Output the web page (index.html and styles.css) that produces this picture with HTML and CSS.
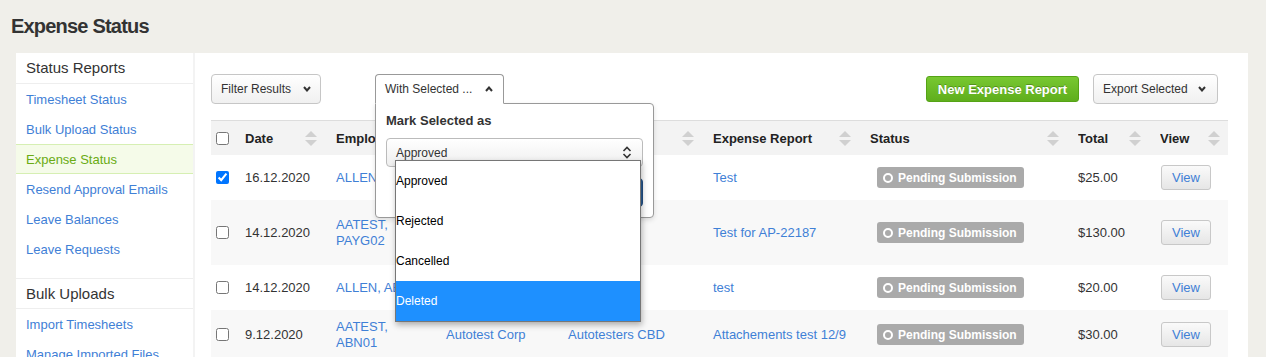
FILE: index.html
```html
<!DOCTYPE html>
<html lang="en">
<head>
  <meta charset="UTF-8">
  <meta name="viewport" content="width=device-width, initial-scale=1.0">
  <title>Expense Status</title>
  <link rel="stylesheet" href="styles.css">
</head>
<body>

  <h1 class="page-title">Expense Status</h1>

  <div class="layout">
    <aside class="sidebar">
      <div class="side-heading">Status Reports</div>
      <ul class="side-links">
        <li><a href="#">Timesheet Status</a></li>
        <li><a href="#">Bulk Upload Status</a></li>
        <li class="active"><a href="#">Expense Status</a></li>
        <li><a href="#">Resend Approval Emails</a></li>
        <li><a href="#">Leave Balances</a></li>
        <li><a href="#">Leave Requests</a></li>
      </ul>
      <div class="side-heading side-heading-next">Bulk Uploads</div>
      <ul class="side-links">
        <li><a href="#">Import Timesheets</a></li>
        <li><a href="#">Manage Imported Files</a></li>
      </ul>
    </aside>

    <main class="content">
      <div class="toolbar">
        <button class="btn btn-drop btn-filter">Filter Results
          <svg class="chev" width="8" height="6" viewBox="0 0 8 6"><polyline points="1,1 4,4.5 7,1"/></svg>
        </button>

        <div class="with-selected">
          <button class="btn btn-drop btn-open">With Selected ...
            <svg class="chev" width="8" height="6" viewBox="0 0 8 6"><polyline points="1,5 4,1.5 7,5"/></svg>
          </button>
          <div class="popover">
            <div class="popover-title">Mark Selected as</div>
            <div class="select">
              <span>Approved</span>
              <svg class="updown" width="10" height="13" viewBox="0 0 10 13"><polyline points="1.5,5 5,1.5 8.5,5"/><polyline points="1.5,8 5,11.5 8.5,8"/></svg>
            </div>
            <div class="popover-actions">
              <button class="btn-apply">Apply</button>
            </div>
            <ul class="select-list">
              <li>Approved</li>
              <li>Rejected</li>
              <li>Cancelled</li>
              <li class="highlight">Deleted</li>
            </ul>
          </div>
        </div>

        <div class="toolbar-right">
          <button class="btn btn-green">New Expense Report</button>
          <button class="btn btn-drop btn-export">Export Selected
            <svg class="chev" width="8" height="6" viewBox="0 0 8 6"><polyline points="1,1 4,4.5 7,1"/></svg>
          </button>
        </div>
      </div>

      <table class="grid">
        <colgroup>
          <col style="width:34px">
          <col style="width:91px">
          <col style="width:110px">
          <col style="width:122px">
          <col style="width:145px">
          <col style="width:157px">
          <col style="width:208px">
          <col style="width:82px">
          <col style="width:68px">
        </colgroup>
        <thead>
          <tr>
            <th class="cb"><input type="checkbox"></th>
            <th>Date <span class="sort"></span></th>
            <th>Employee <span class="sort"></span></th>
            <th>Company <span class="sort"></span></th>
            <th>Location <span class="sort"></span></th>
            <th>Expense Report <span class="sort"></span></th>
            <th>Status <span class="sort"></span></th>
            <th>Total <span class="sort"></span></th>
            <th>View <span class="sort sort-last"></span></th>
          </tr>
        </thead>
        <tbody>
          <tr>
            <td class="cb"><input type="checkbox" checked></td>
            <td>16.12.2020</td>
            <td><a href="#">ALLEN, ABN01</a></td>
            <td><a href="#">Autotest Corp</a></td>
            <td><a href="#">Sydney</a></td>
            <td><a href="#">Test</a></td>
            <td class="status"><span class="badge"><i class="ring"></i>Pending Submission</span></td>
            <td>$25.00</td>
            <td><button class="btn-view">View</button></td>
          </tr>
          <tr class="tall">
            <td class="cb"><input type="checkbox"></td>
            <td>14.12.2020</td>
            <td><a href="#">AATEST, PAYG02</a></td>
            <td><a href="#">Autotest Corp</a></td>
            <td><a href="#">Sydney</a></td>
            <td><a href="#">Test for AP-22187</a></td>
            <td class="status"><span class="badge"><i class="ring"></i>Pending Submission</span></td>
            <td>$130.00</td>
            <td><button class="btn-view">View</button></td>
          </tr>
          <tr>
            <td class="cb"><input type="checkbox"></td>
            <td>14.12.2020</td>
            <td><a href="#">ALLEN, ABN01</a></td>
            <td><a href="#">Autotest Corp</a></td>
            <td><a href="#">Sydney</a></td>
            <td><a href="#">test</a></td>
            <td class="status"><span class="badge"><i class="ring"></i>Pending Submission</span></td>
            <td>$20.00</td>
            <td><button class="btn-view">View</button></td>
          </tr>
          <tr class="mid">
            <td class="cb"><input type="checkbox"></td>
            <td>9.12.2020</td>
            <td><a href="#">AATEST, ABN01</a></td>
            <td><a href="#">Autotest Corp</a></td>
            <td><a href="#">Autotesters CBD</a></td>
            <td><a href="#">Attachements test 12/9</a></td>
            <td class="status"><span class="badge"><i class="ring"></i>Pending Submission</span></td>
            <td>$30.00</td>
            <td><button class="btn-view">View</button></td>
          </tr>
        </tbody>
      </table>
    </main>
  </div>

</body>
</html>
```

FILE: styles.css
```css
body {
  margin: 0;
  font-family: "Liberation Sans", Arial, sans-serif;
  font-size: 13px;
  color: #333;
  background-color: #f0efea;
  overflow: hidden;
}

a {
  color: #3f80d6;
  text-decoration: none;
}

.page-title {
  margin: 15px 0 15px 11px;
  font-size: 20px;
  line-height: 23px;
  letter-spacing: -0.8px;
  color: #333;
}

.layout {
  display: flex;
  margin: 0 18px 0 16px;
  background: #fff;
  min-height: 320px;
}

/* sidebar */
.sidebar {
  width: 177px;
  flex-shrink: 0;
  border-right: 2px solid #f3f3f3;
}

.side-heading {
  height: 30px;
  line-height: 30px;
  padding-left: 10px;
  font-size: 15px;
  color: #333;
  border-bottom: 1px solid #eee;
}

.side-heading-next {
  border-top: 1px solid #eee;
  height: 29px;
  line-height: 29px;
}

.side-links {
  list-style: none;
  margin: 0;
  padding: 0 0 14px;
}

.side-links li {
  height: 30px;
  line-height: 31px;
  padding-left: 10px;
  box-sizing: border-box;
}

.side-links li.active {
  background: #f5fbe9;
  border-top: 1px solid #d6efb3;
  border-bottom: 1px solid #d6efb3;
  line-height: 29px;
}

.side-links li.active a {
  color: #6aab14;
}

/* content */
.content {
  flex: 1;
  padding: 21px 20px 0 16px;
}

.toolbar {
  display: flex;
  align-items: center;
  height: 30px;
  margin-bottom: 16px;
}

.btn {
  font-family: inherit;
  font-size: 12px;
  color: #333;
  height: 30px;
  padding: 0 9px;
  border: 1px solid #c6c6c6;
  border-radius: 4px;
  background: linear-gradient(#fff, #f0f0f0);
  display: flex;
  align-items: center;
  justify-content: space-between;
  box-sizing: border-box;
}

.chev {
  fill: none;
  stroke: #333;
  stroke-width: 2;
}

.btn-filter {
  width: 110px;
}

.with-selected {
  position: relative;
  margin-left: 54px;
}

.btn-open {
  position: relative;
  z-index: 3;
  width: 129px;
  padding-right: 10px;
  background: #fff;
  border-color: #999;
  border-bottom-color: #fff;
  border-radius: 4px 4px 0 0;
}

.popover {
  position: absolute;
  z-index: 2;
  top: 29px;
  left: 0;
  width: 279px;
  box-sizing: border-box;
  padding: 9px 10px 10px;
  background: #fff;
  border: 1px solid #999;
  border-radius: 0 4px 4px 4px;
  box-shadow: 0 2px 5px rgba(0, 0, 0, 0.12);
}

.popover-title {
  font-weight: bold;
  font-size: 13px;
  line-height: 16px;
  color: #333;
  margin-bottom: 9px;
}

.select {
  height: 29px;
  box-sizing: border-box;
  border: 1px solid #bbb;
  border-radius: 4px;
  background: linear-gradient(#fff, #eee);
  display: flex;
  align-items: center;
  justify-content: space-between;
  padding: 0 10px 0 9px;
  font-size: 12px;
  color: #333;
}

.updown {
  fill: none;
  stroke: #333;
  stroke-width: 1.6;
}

.popover-actions {
  display: flex;
  justify-content: flex-end;
  margin-top: 11px;
}

.btn-apply {
  height: 29px;
  width: 70px;
  border: 1px solid #234f84;
  border-radius: 4px;
  background: #2c5f98;
  color: #fff;
  font-family: inherit;
  font-size: 12px;
}

.select-list {
  position: absolute;
  top: 56px;
  left: 19px;
  width: 246px;
  box-sizing: border-box;
  margin: 0;
  padding: 0;
  list-style: none;
  background: #fff;
  border: 1px solid #767676;
  box-shadow: 1px 3px 6px rgba(0, 0, 0, 0.3);
  font-size: 12px;
  color: #000;
}

.select-list li {
  height: 40px;
  line-height: 40px;
  padding-left: 0;
}

.select-list li.highlight {
  background: #1e90ff;
  color: #fff;
}

.toolbar-right {
  display: flex;
  align-items: center;
  gap: 14px;
  margin-left: auto;
  margin-right: 10px;
}

.btn-green {
  height: 26px;
  width: 153px;
  justify-content: center;
  font-size: 13px;
  font-weight: bold;
  color: #fff;
  text-shadow: 0 -1px 0 rgba(0, 0, 0, 0.25);
  border: 1px solid #55a316;
  border-radius: 3px;
  background: linear-gradient(#78c831, #5fae1c);
}

.btn-export {
  width: 125px;
  padding-right: 11px;
}

/* table */
.grid {
  width: 100%;
  border-collapse: collapse;
  table-layout: fixed;
}

.grid th {
  position: relative;
  height: 34px;
  padding: 0;
  text-align: left;
  font-weight: bold;
  font-size: 13px;
  color: #222;
  background: #f3f3f3;
  border-top: 1px solid #ddd;
  white-space: nowrap;
  overflow: hidden;
}

.grid td {
  height: 45px;
  padding: 0 16px 0 0;
  vertical-align: middle;
  line-height: 16px;
}

.grid tr.tall td {
  height: 65px;
}

.grid tr.mid td {
  height: 49px;
}

.grid tbody tr:nth-child(even) {
  background: #f8f8f8;
}

.grid .cb {
  padding-left: 5px;
}

.grid input[type="checkbox"] {
  margin: 0;
  width: 13px;
  height: 13px;
  display: block;
}

.sort {
  position: absolute;
  right: 19px;
  top: 10px;
  width: 12px;
  height: 15px;
}

.sort::before,
.sort::after {
  content: "";
  position: absolute;
  left: 0;
  border-left: 6px solid transparent;
  border-right: 6px solid transparent;
}

.sort::before {
  top: 0;
  border-bottom: 6px solid #d0d0d0;
}

.sort::after {
  bottom: 0;
  border-top: 6px solid #d0d0d0;
}

.sort-last {
  right: 8px;
}

.status {
  padding-left: 7px !important;
}

.badge {
  display: inline-flex;
  align-items: center;
  height: 21px;
  padding: 0 7px 0 6px;
  border-radius: 3px;
  background: #aaa;
  color: #fff;
  font-weight: bold;
  font-size: 12px;
  white-space: nowrap;
}

.ring {
  width: 10px;
  height: 10px;
  box-sizing: border-box;
  border: 2px solid #fff;
  border-radius: 50%;
  margin-right: 5px;
}

.btn-view {
  margin-left: 1px;
  width: 50px;
  height: 25px;
  font-family: inherit;
  font-size: 13px;
  color: #3f80d6;
  border: 1px solid #c8c8c8;
  border-radius: 3px;
  background: linear-gradient(#fafafa, #e6e6e6);
}
```
